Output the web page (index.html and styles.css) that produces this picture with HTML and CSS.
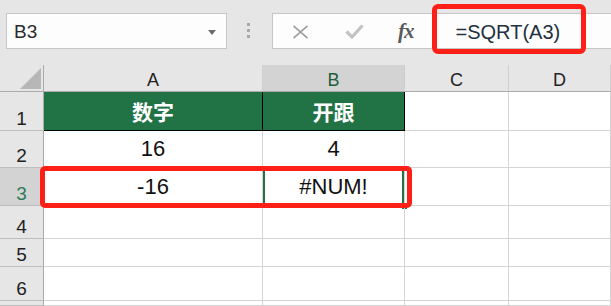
FILE: index.html
```html
<!DOCTYPE html>
<html lang="zh">
<head>
<meta charset="utf-8">
<title>SQRT</title>
<link rel="stylesheet" href="styles.css">
</head>
<body>
<div class="app">
  <div class="toolbar">
    <div class="namebox">
      <span class="nb-text">B3</span>
      <svg class="nb-arrow" width="8" height="5" viewBox="0 0 8 5"><path d="M0 0H8L4 5Z" fill="#6b6b6b"/></svg>
    </div>
    <div class="grip"><i></i><i></i><i></i></div>
    <div class="fbar">
      <svg class="ic-x" width="17" height="14" viewBox="0 0 17 14"><path d="M1.5 0.8L15.5 13.2M15.5 0.8L1.5 13.2" stroke="#9c9c9c" stroke-width="1.6" fill="none"/></svg>
      <svg class="ic-check" width="19" height="15" viewBox="0 0 19 15"><path d="M1.5 7.5L7 13L17.5 1.5" stroke="#c3c3c3" stroke-width="3.2" fill="none" stroke-linejoin="miter"/></svg>
      <span class="ic-fx">fx</span>
      <span class="formula">=SQRT(A3)</span>
    </div>
  </div>
  <div class="sheet">
    <div class="c corner"><svg width="21" height="21" viewBox="0 0 21 21"><path d="M21 0V21H0Z" fill="#b7b7b7"/></svg></div>
    <div class="c ch">A</div>
    <div class="c ch ch-sel">B</div>
    <div class="c ch">C</div>
    <div class="c ch">D</div>

    <div class="c rh">1</div>
    <div class="c hd">数字</div>
    <div class="c hd">开跟</div>
    <div class="c"></div>
    <div class="c"></div>

    <div class="c rh">2</div>
    <div class="c val">16</div>
    <div class="c val">4</div>
    <div class="c"></div>
    <div class="c"></div>

    <div class="c rh rh-sel">3</div>
    <div class="c val">-16</div>
    <div class="c val sel">#NUM!<span class="handle"></span></div>
    <div class="c"></div>
    <div class="c"></div>

    <div class="c rh">4</div>
    <div class="c"></div>
    <div class="c"></div>
    <div class="c"></div>
    <div class="c"></div>

    <div class="c rh">5</div>
    <div class="c"></div>
    <div class="c"></div>
    <div class="c"></div>
    <div class="c"></div>

    <div class="c rh">6</div>
    <div class="c"></div>
    <div class="c"></div>
    <div class="c"></div>
    <div class="c"></div>

    <div class="c rh"></div>
    <div class="c"></div>
    <div class="c"></div>
    <div class="c"></div>
    <div class="c"></div>
  </div>
  <div class="mark mark-formula"></div>
  <div class="mark mark-cell"></div>
</div>
</body>
</html>
```

FILE: styles.css
```css
* { box-sizing: border-box; }
html, body {
  margin: 0;
  padding: 0;
  width: 611px;
  height: 306px;
  overflow: hidden;
  background: #ffffff;
  font-family: "Liberation Sans", "Noto Sans CJK SC", sans-serif;
}
.app {
  position: relative;
  width: 611px;
  height: 306px;
  overflow: hidden;
}
.toolbar {
  height: 65px;
  background: #e6e6e6;
  display: flex;
  align-items: flex-start;
  padding: 13px 0 0 6px;
}
.namebox {
  width: 221px;
  height: 36px;
  background: #fdfdfd;
  border: 1px solid #c6c6c6;
  display: flex;
  align-items: center;
  padding-left: 7px;
}
.nb-text {
  font-size: 19px;
  color: #2a2a2a;
  line-height: 1;
  margin-top: 1px;
}
.nb-arrow {
  margin-left: auto;
  margin-right: 10px;
  margin-top: 2px;
}
.grip {
  margin-left: 20px;
  margin-top: 10px;
  display: flex;
  flex-direction: column;
  gap: 3px;
}
.grip i {
  display: block;
  width: 3px;
  height: 3px;
  background: #a9a9a9;
}
.fbar {
  margin-left: 22px;
  margin-right: -20px;
  flex: 1;
  height: 36px;
  background: #fdfdfd;
  border: 1px solid #c6c6c6;
  display: flex;
  align-items: center;
}
.ic-x { margin-left: 19px; margin-top: 1px; }
.ic-check { margin-left: 36px; margin-top: 1px; }
.ic-fx {
  margin-left: 34px;
  font-family: "Liberation Serif", serif;
  font-style: italic;
  font-weight: bold;
  font-size: 21px;
  color: #5a5a5a;
  line-height: 1;
  letter-spacing: -1px;
}
.formula {
  margin-left: 42px;
  font-size: 20px;
  color: #22303f;
  line-height: 1;
  margin-top: 1px;
}
.sheet {
  display: grid;
  grid-template-columns: 44px 219px 142px 104px 1fr;
  grid-template-rows: 27px 39px 37px 38px 33px 28px 34px 1fr;
  height: 241px;
}
.c {
  border-right: 1px solid #d4d4d4;
  border-bottom: 1px solid #d4d4d4;
  position: relative;
}
.corner {
  background: #e6e6e6;
  border-right: 1px solid #ababab;
  border-bottom: 1px solid #ababab;
  display: flex;
  align-items: flex-end;
  justify-content: flex-end;
  padding: 0 2px 2px 0;
}
.ch {
  background: #e6e6e6;
  border-right: 1px solid #cfcfcf;
  border-bottom: 1px solid #ababab;
  display: flex;
  justify-content: center;
  align-items: flex-end;
  font-size: 18px;
  line-height: 18px;
  color: #222;
  padding-bottom: 2px;
}
.ch-sel {
  background: #d3d3d3;
  color: #1e5e3c;
}
.rh {
  background: #e6e6e6;
  border-right: 1px solid #ababab;
  border-bottom: 1px solid #bdbdbd;
  display: flex;
  justify-content: center;
  align-items: flex-end;
  font-size: 19px;
  line-height: 19px;
  color: #222;
  padding-bottom: 2px;
}
.rh-sel {
  background: #d3d3d3;
  color: #2f7a5a;
}
.hd {
  background: #217346;
  border-right: 1px solid #000;
  border-bottom: 1px solid #000;
  color: #ffffff;
  font-family: "Noto Sans CJK SC", sans-serif;
  font-weight: bold;
  font-size: 21px;
  display: flex;
  align-items: center;
  justify-content: center;
  line-height: 1;
}
.val {
  display: flex;
  align-items: center;
  justify-content: center;
  font-size: 22px;
  line-height: 1;
  color: #111;
}
.sel {
  box-shadow: inset 2px 0 0 #217346, inset -2px 0 0 #217346;
}
.handle {
  position: absolute;
  right: -3px;
  bottom: -4px;
  width: 5px;
  height: 5px;
  background: #217346;
}
.mark {
  position: absolute;
  border: 5px solid #fe2016;
  border-radius: 6px;
}
.mark-formula {
  left: 432px;
  top: 4px;
  width: 154px;
  height: 50px;
}
.mark-cell {
  left: 40px;
  top: 166px;
  width: 372px;
  height: 42px;
  border-radius: 5px;
}
```
